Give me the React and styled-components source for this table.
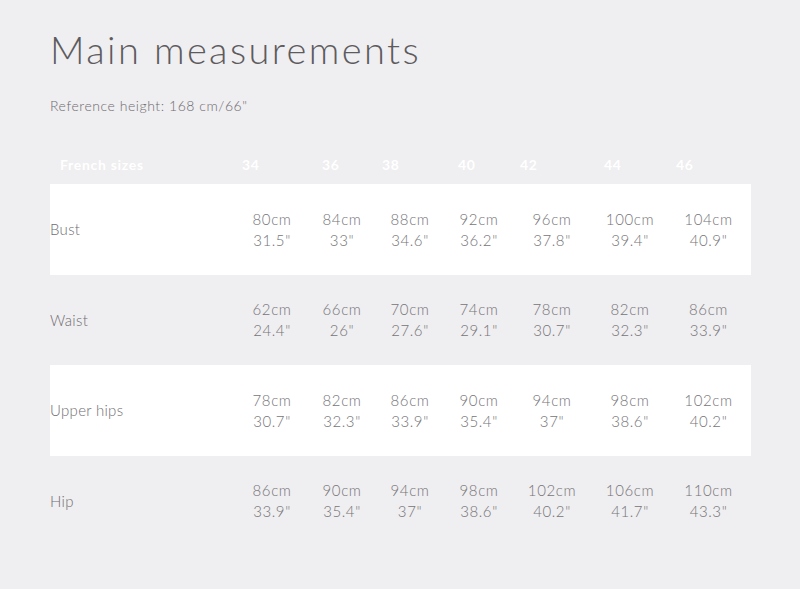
import React from 'react'
import styled, { createGlobalStyle } from "styled-components"

const GlobalStyle = createGlobalStyle`
  html, body {
    margin: 0;
    padding: 0;
    background: #efeef0;
  }
  body {
    font-family: "Lato", "Open Sans", sans-serif;
  }
`

const sizes = ["34", "36", "38", "40", "42", "44", "46"]

const rows = [
  { name: "Bust", cm: [80, 84, 88, 92, 96, 100, 104], inch: ["31.5", "33", "34.6", "36.2", "37.8", "39.4", "40.9"] },
  { name: "Waist", cm: [62, 66, 70, 74, 78, 82, 86], inch: ["24.4", "26", "27.6", "29.1", "30.7", "32.3", "33.9"] },
  { name: "Upper hips", cm: [78, 82, 86, 90, 94, 98, 102], inch: ["30.7", "32.3", "33.9", "35.4", "37", "38.6", "40.2"] },
  { name: "Hip", cm: [86, 90, 94, 98, 102, 106, 110], inch: ["33.9", "35.4", "37", "38.6", "40.2", "41.7", "43.3"] },
]

const App = () => {
  return (
    <Page>
      <GlobalStyle />
      <Title>Main measurements</Title>
      <Subtitle>Reference height: 168 cm/66"</Subtitle>
      <Table>
        <HeadRow>
          <HeadCell>French sizes</HeadCell>
          {sizes.map((s) => (
            <HeadCell key={s}>{s}</HeadCell>
          ))}
        </HeadRow>
        {rows.map((r, i) => (
          <Row key={r.name} $white={i % 2 === 0}>
            <Label>{r.name}</Label>
            {r.cm.map((c, j) => (
              <Value key={j}>
                <span>{c}cm</span>
                <span>{r.inch[j]}"</span>
              </Value>
            ))}
          </Row>
        ))}
      </Table>
    </Page>
  );
};

const Page = styled.div`
  width: 800px;
  height: 589px;
  box-sizing: border-box;
  padding: 29px 49px 0 50px;
  background: #efeef0;
  overflow: hidden;
`;

const Title = styled.h1`
  margin: 0;
  font-family: "Lato", sans-serif;
  font-weight: 300;
  font-size: 38px;
  letter-spacing: 2.4px;
  line-height: 40px;
  color: #5d5b5e;
`;

const Subtitle = styled.div`
  margin-top: 28px;
  font-size: 14px;
  font-weight: 300;
  color: #6e6c70;
  letter-spacing: 0.55px;
`;

const cols = "182px 80px 60px 76px 62px 84px 72px 85px";

const Table = styled.div`
  margin-top: 30px;
  width: 701px;
`;

const HeadRow = styled.div`
  display: grid;
  grid-template-columns: ${cols};
  height: 40px;
  align-items: center;
`;

const HeadCell = styled.div`
  padding-left: 10px;
  color: #ffffff;
  font-weight: 700;
  font-size: 14px;
  letter-spacing: 0.7px;
`;

const Row = styled.div`
  display: grid;
  grid-template-columns: ${cols};
  height: 90.5px;
  align-items: center;
  background: ${(p) => (p.$white ? "#ffffff" : "transparent")};
`;

const Label = styled.div`
  font-size: 15px;
  font-weight: 300;
  letter-spacing: 0.3px;
  color: #6f6d71;
`;

const Value = styled.div`
  display: flex;
  flex-direction: column;
  align-items: center;
  gap: 3px;
  font-size: 15px;
  font-weight: 300;
  letter-spacing: 0.6px;
  color: #767478;
  margin-top: 0px;
  span {
    line-height: 18px;
  }
`;

export default App;
